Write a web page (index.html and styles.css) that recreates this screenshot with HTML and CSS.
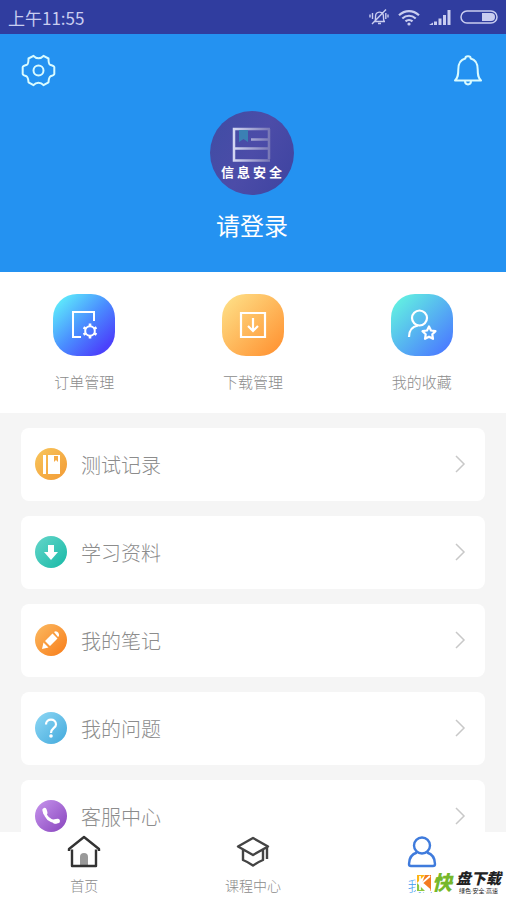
FILE: index.html
```html
<!DOCTYPE html>
<html lang="zh-CN">
<head>
<meta charset="utf-8">
<meta name="viewport" content="width=device-width, initial-scale=1">
<title>我的</title>
<link rel="stylesheet" href="styles.css">
</head>
<body>
<div class="status">
  <span>上午11:55</span>
  <div class="status-icons">
    <svg width="20" height="18" viewBox="0 0 20 18" fill="none" stroke="currentColor" stroke-width="1.400"><path d="M5 13.500h11M6 13c1-2 0-5 1-7 1-2 5-3 7 0 1 2 0 5 1 7M9 15.500h3M3.500 5v6M1 6.500v3M16.800 5v6M19 6.500v3M3 16 17 1.500"/></svg>
    <svg width="22" height="17" viewBox="0 0 22 17" fill="none" stroke="currentColor" stroke-width="2.200"><path d="M1 6.300C7 .8 15 .8 21 6.300M4.300 9.500c4-3.700 9.400-3.700 13.400 0M7.500 12.400c2-1.900 5-1.900 7 0"/><circle cx="11" cy="15" r="1.600" fill="currentColor" stroke="none"/></svg>
    <svg width="22" height="16" viewBox="0 0 22 16" fill="currentColor"><path d="M0 16l4-2.500V16zM5 12.500h3V16H5zM9.500 9.500h3V16h-3zM14 6h3v10h-3zM18.500 1h3v15h-3z"/></svg>
    <svg width="38" height="14" viewBox="0 0 38 14"><rect x="1" y="1" width="36" height="12" rx="6" fill="none" stroke="currentColor" stroke-width="1.500"/><path d="M22 3h9a4 4 0 0 1 0 8h-9z" fill="currentColor"/></svg>
  </div>
</div>
<main class="content">
  <header class="profile">
    <div class="tools">
      <button class="tool" type="button" aria-label="设置">
        <svg width="35" height="34" viewBox="0 0 35 34" fill="none" stroke="currentColor" stroke-width="2" stroke-linejoin="round"><path d="M12.500 1.800Q14.500 4.200 17.500 4.200T22.500 1.800L27.500 4.500Q27.500 10 29 10.700Q33.300 12 33.300 13V20Q33.300 21 29.500 22.300Q27.800 23.500 27.500 28.300L22.500 31.200Q20.500 28.800 17.500 28.800T12.500 31.200L7.500 28.300Q7.200 23.500 5.500 22.300Q1.700 21 1.700 20V13Q1.700 12 6 10.700Q7.500 10 7.500 4.500Z"/><circle cx="17.500" cy="16.500" r="5"/></svg>
      </button>
      <button class="tool" type="button" aria-label="消息">
        <svg width="30" height="34" viewBox="0 0 30 34" fill="none" stroke="currentColor" stroke-width="2" stroke-linejoin="round"><path d="M2 26.500C5 23.500 5.300 21 5.300 15.500C5.300 9 8 5.500 12.300 4.500C12.300 1.500 17.700 1.500 17.700 4.500C22 5.500 24.700 9 24.700 15.500C24.700 21 25 23.500 28 26.500ZM12 27C12 31.500 18 31.500 18 27"/></svg>
      </button>
    </div>
    <div class="avatar">
      <svg width="42" height="36" viewBox="0 0 42 36" fill="none"><defs><linearGradient id="book" x1="0" x2="1"><stop stop-color="#d5d9f4"/><stop offset="1" stop-color="#7776b5"/></linearGradient></defs><path d="M39 2H3V33.500H39M39 12.500H20M2 21.500H39M38 2v30" stroke="url(#book)" stroke-width="2.500"/><path d="M8 3h9v12l-4.500-3L8 15z" fill="#3b80b4"/></svg>
      <span>信息安全</span>
    </div>
    <a class="login" href="#login">请登录</a>
  </header>
  <nav class="shortcuts" aria-label="快捷入口">
    <a href="#orders"><span class="tile indigo"><svg width="32" height="32" viewBox="0 0 32 32" fill="none" stroke="currentColor" stroke-width="2"><path d="M13 28H5V3H26V12"/><circle cx="22" cy="22" r="4.800"/><path d="M22 17.500V14.500M22 26.500v3M25.900 19.800l2.600-1.500M18.100 24.200l-2.600 1.500M25.900 24.200l2.600 1.500M18.100 19.800l-2.600-1.500" stroke-width="2.600"/></svg></span>订单管理</a>
    <a href="#downloads"><span class="tile amber"><svg width="32" height="32" viewBox="0 0 32 32" fill="none" stroke="currentColor" stroke-width="2.200"><path d="M4 4H28V28H4ZM16 9V22M11 17l5 5 5-5"/></svg></span>下载管理</a>
    <a href="#favorites"><span class="tile sky"><svg width="32" height="32" viewBox="0 0 32 32" fill="none" stroke="currentColor" stroke-width="2.200" stroke-linejoin="round"><circle cx="13.500" cy="9" r="7.500"/><path d="M3 28Q3 18 12 16.500M23 17.500l2 4 4.500.7-3.200 3.100.7 4.500-4-2.100-4 2.100.7-4.500-3.200-3.100 4.500-.7z"/></svg></span>我的收藏</a>
  </nav>
  <nav class="list" aria-label="功能列表">
    <a class="row" href="#tests"><span class="dot gold"><svg width="32" height="32" viewBox="0 0 32 32" fill="currentColor"><path d="M8 7h3v19H8zM13 7h12v19H13z"/><path d="M19 8h4v6l-2-2-2 2z" fill="#f5ab46"/></svg></span><span class="label">测试记录</span><svg class="arrow" width="12" height="18" viewBox="0 0 12 18"><path d="M2 1l8 8-8 8"/></svg></a>
    <a class="row" href="#materials"><span class="dot teal"><svg width="32" height="32" viewBox="0 0 32 32" fill="currentColor"><path d="M13 9h6v7h4l-7 8-7-8h4z"/></svg></span><span class="label">学习资料</span><svg class="arrow" width="12" height="18" viewBox="0 0 12 18"><path d="M2 1l8 8-8 8"/></svg></a>
    <a class="row" href="#notes"><span class="dot orange"><svg width="32" height="32" viewBox="0 0 32 32" fill="currentColor"><path d="M7 25l1.500-6.500 5 5zM10 17l7.500-7.500 5 5L15 22zM19 8l1.500-.8Q24.500 8 24 12l-1 1z"/></svg></span><span class="label">我的笔记</span><svg class="arrow" width="12" height="18" viewBox="0 0 12 18"><path d="M2 1l8 8-8 8"/></svg></a>
    <a class="row" href="#questions"><span class="dot blue"><svg width="32" height="32" viewBox="0 0 32 32" fill="none" stroke="currentColor" stroke-width="2.200"><path d="M11 12.500C11 6 21 6 21 12.500C21 16 16 16 16 21"/><circle cx="16" cy="24" r="1.800" fill="currentColor" stroke="none"/></svg></span><span class="label">我的问题</span><svg class="arrow" width="12" height="18" viewBox="0 0 12 18"><path d="M2 1l8 8-8 8"/></svg></a>
    <a class="row" href="#service"><span class="dot purple"><svg width="32" height="32" viewBox="0 0 32 32" fill="none" stroke="currentColor" stroke-linecap="round"><path d="M9.500 11Q11 20.500 21 22" stroke-width="2.800"/><path d="M9.500 10l.8 2.800M19.800 21.500l3-.5" stroke-width="4.400"/></svg></span><span class="label">客服中心</span><svg class="arrow" width="12" height="18" viewBox="0 0 12 18"><path d="M2 1l8 8-8 8"/></svg></a>
  </nav>
</main>
<nav class="tabs" aria-label="主导航">
  <a href="#home"><svg width="34" height="34" viewBox="0 0 34 34" fill="none" stroke="#333" stroke-width="2.400" stroke-linejoin="round"><path d="M13 31V22a4 4 0 0 1 8 0v9z" fill="#999" stroke="none"/><path d="M5 14.500V31H29V14.500M2 16V14L17 2 32 14v2"/></svg>首页</a>
  <a href="#courses"><svg width="34" height="34" viewBox="0 0 34 34" fill="none" stroke="#444" stroke-width="2.400" stroke-linejoin="round"><path d="M2 11.500L17 3 32 11.500 17 20ZM7 15V25Q12 27 17 30.500Q22 27 27 25V15M31 12V24"/></svg>课程中心</a>
  <a class="active" href="#me" aria-current="page"><svg width="34" height="34" viewBox="0 0 34 34" fill="none" stroke="#3f7bdc" stroke-width="2.400" stroke-linejoin="round"><circle cx="17" cy="10.500" r="8"/><path d="M12 17.500Q4 20 4 29Q4 31 6 31H28Q30 31 30 29Q30 20 22 17.500"/></svg>我的</a>
</nav>
<div class="brand">
  <svg width="16" height="18" viewBox="0 0 16 18"><path d="M0 0h16v18H0z" fill="#fff"/><path d="M1 1h8L1 9z" fill="#fdb515"/><path d="M9 1h6v16L6 9z" fill="#f47b20"/><path d="M1 9l8 8H1z" fill="#8cc63f"/><path d="M4 2v14M14 2L6 9l8 7" fill="none" stroke="#fff" stroke-width="1.700"/></svg>
  <span class="brand-lead">快</span>
  <span class="brand-text"><b>盘下载</b><small>绿色·安全·高速</small></span>
</div>
</body>
</html>
```
FILE: styles.css
```css
* { box-sizing: border-box; }

body {
  display: flex;
  flex-direction: column;
  height: 100vh;
  margin: 0;
  background: #f5f5f5;
  color: #8c8c8c;
  font-family: Roboto, "Noto Sans CJK SC", sans-serif;
}

a { color: inherit; text-decoration: none; }
svg { display: block; flex: none; }

.status {
  display: flex;
  flex: none;
  align-items: center;
  justify-content: space-between;
  height: 34px;
  padding: 0 8px;
  background: #303d9f;
  color: #c9cdf0;
  font-family: "Noto Sans CJK SC", sans-serif;
  font-size: 17px;
}

.status-icons { display: flex; align-items: center; gap: 9px; }

.content {
  flex: 1;
  min-height: 0;
  overflow-y: auto;
  scrollbar-width: none;
}

.profile {
  display: flex;
  flex-direction: column;
  align-items: center;
  padding: 17px 21px 27px 19px;
  background: #2492f1;
  color: #fff;
}

.tools { display: flex; justify-content: space-between; width: 100%; }

.tool {
  display: flex;
  align-items: center;
  justify-content: center;
  height: 40px;
  padding: 0 2px;
  border: 0;
  background: none;
  color: #d9fbff;
}

.avatar {
  display: flex;
  flex-direction: column;
  align-items: center;
  gap: 2px;
  width: 84px;
  height: 84px;
  margin-top: 20px;
  padding-top: 16px;
  border-radius: 50%;
  background: linear-gradient(120deg, #3f4da4, #4c4ca8 50%, #3d43a0);
}

.avatar span {
  padding-left: 2px;
  font-size: 13px;
  font-weight: 700;
  line-height: 16px;
  letter-spacing: 3px;
}

.login { margin-top: 14px; font-size: 24px; line-height: 36px; }

.shortcuts, .tabs {
  display: grid;
  grid-template-columns: repeat(3, 1fr);
  background: #fff;
}

.shortcuts { padding: 22px 0 19px; font-size: 15px; line-height: 22px; }

.shortcuts a, .tabs a {
  display: flex;
  flex-direction: column;
  align-items: center;
  font-weight: 300;
}

.shortcuts a { gap: 16px; }

.tile {
  display: flex;
  align-items: center;
  justify-content: center;
  width: 62px;
  height: 62px;
  border-radius: 24px;
  color: #fff;
}

.indigo { background: linear-gradient(135deg, #5ee9fb 10%, #4a8dff 50%, #4b42fb 85%); }
.amber { background: linear-gradient(135deg, #fedb82 10%, #ff9636 90%); }
.sky { background: linear-gradient(135deg, #62eee2 10%, #4b7cff 90%); }

.list {
  display: flex;
  flex-direction: column;
  gap: 15px;
  padding: 15px 21px;
}

.row {
  display: flex;
  align-items: center;
  gap: 14px;
  height: 73px;
  padding: 0 19px 1px 14px;
  border-radius: 8px;
  background: #fff;
}

.dot { flex: none; border-radius: 50%; color: #fff; }
.gold { background: linear-gradient(135deg, #f8c65c, #f29a35); }
.teal { background: linear-gradient(135deg, #65d6ca, #17b9a6); }
.orange { background: linear-gradient(135deg, #fbba62, #f87c18); }
.blue { background: linear-gradient(135deg, #8fd8f5, #42a9dc); }
.purple { background: linear-gradient(135deg, #c795ed, #8844bd); }

.label { flex: 1; font-size: 20px; font-weight: 300; }

.arrow { fill: none; stroke: #c8c8c8; stroke-width: 1.5; }

.tabs {
  flex: none;
  height: 68px;
  padding-top: 3px;
  font-size: 14px;
  line-height: 20px;
}

.tabs a { gap: 7px; }
.tabs .active { color: #3f9bf0; }

.brand {
  position: absolute;
  right: 5px;
  bottom: 5px;
  display: flex;
  align-items: center;
  color: #222;
}

.brand-lead {
  background: #fff;
  color: #76b82a;
  font-size: 20px;
  font-style: italic;
  font-weight: 900;
  line-height: 22px;
}

.brand-text { display: flex; flex-direction: column; align-items: center; padding-left: 4px; }
.brand-text b { font-size: 15px; font-style: italic; font-weight: 900; line-height: 16px; }
.brand-text small { font-size: 6px; line-height: 8px; }
```
